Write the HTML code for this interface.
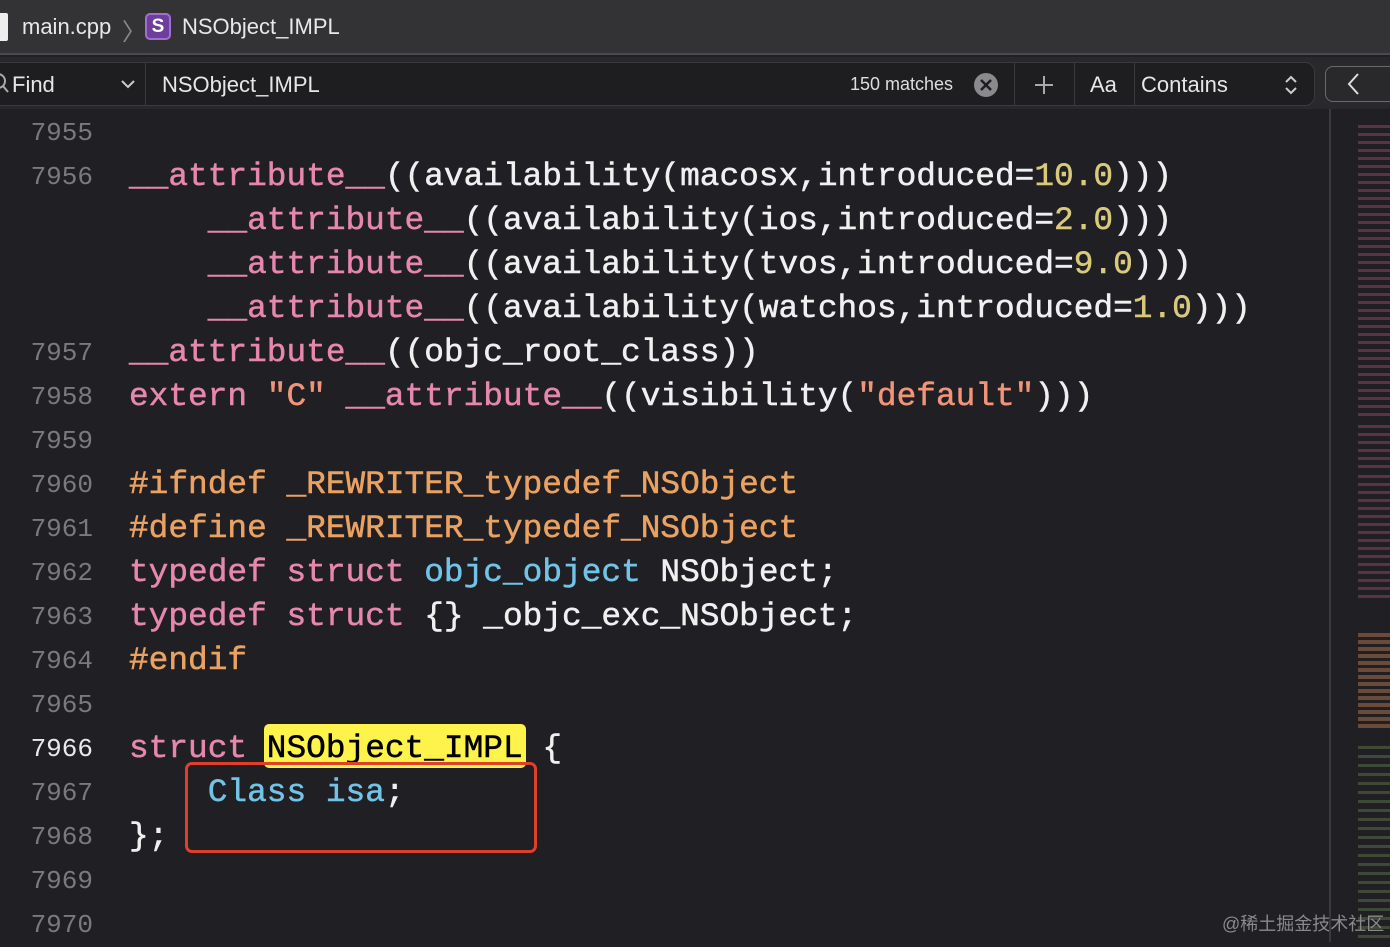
<!DOCTYPE html>
<html><head><meta charset="utf-8"><style>
*{margin:0;padding:0;box-sizing:border-box}
body{width:1390px;height:942px;background:#1f1f24;overflow:hidden;position:relative;font-family:"Liberation Sans",sans-serif;color:#e6e6e6}
.top{position:absolute;left:0;top:0;width:1390px;height:55px;background:#333336;border-bottom:2px solid #4a4a4c}
.find{position:absolute;left:0;top:57px;width:1390px;height:52px;background:#29292c}
.fb{position:absolute;top:62px;height:44px;border:1px solid #3a3a3d;background:#1e1e21}
.code{position:absolute;left:0;top:111px;width:1329px;height:831px}
.ln{position:absolute;left:13px;width:80px;text-align:right;font-family:"Liberation Mono",monospace;font-size:26px;color:#7a7a7e;line-height:44px}
.l{position:absolute;left:129px;font-family:"Liberation Mono",monospace;font-size:32.8px;line-height:44px;white-space:pre;color:#f0f0f0;-webkit-text-stroke:0.5px currentColor}
.k{color:#e587ae}.p{color:#eaa263}.b{color:#72c3e6}.n{color:#d9c97c}.s{color:#f0947a}
.mm{position:absolute;left:1329px;top:109px;width:2px;height:833px;background:#3a3a3e}
</style></head><body>
<div class="top">
 <div style="position:absolute;left:-6px;top:13px;width:14px;height:28px;background:#eee;border-radius:2px"></div>
 <div style="position:absolute;left:22px;top:14px;font-size:22px;color:#e8e8e8">main.cpp</div>
 <div style="position:absolute;left:122px;top:12px;font-size:24px;color:#888">〉</div>
 <div style="position:absolute;left:145px;top:13px;width:26px;height:27px;background:#6d3e9c;border:2px solid #a070d0;border-radius:5px;color:#fff;font-weight:bold;font-size:19px;text-align:center;line-height:23px">S</div>
 <div style="position:absolute;left:182px;top:14px;font-size:22px;color:#e8e8e8">NSObject_IMPL</div>
</div>
<div class="find"></div>
<div class="fb" style="left:-2px;width:1317px;border-radius:0 10px 10px 0"></div>
<div style="position:absolute;left:145px;top:62px;width:1px;height:44px;background:#3a3a3d"></div>
<div style="position:absolute;left:1014px;top:62px;width:1px;height:44px;background:#3a3a3d"></div>
<div style="position:absolute;left:1074px;top:62px;width:1px;height:44px;background:#3a3a3d"></div>
<div style="position:absolute;left:1134px;top:62px;width:1px;height:44px;background:#3a3a3d"></div>
<svg style="position:absolute;left:-8px;top:72px" width="20" height="24"><circle cx="6" cy="9" r="7" fill="none" stroke="#aaa" stroke-width="2"/><line x1="11" y1="14" x2="16" y2="20" stroke="#aaa" stroke-width="2"/></svg>
<div style="position:absolute;left:12px;top:72px;font-size:22px">Find</div>
<svg style="position:absolute;left:120px;top:78px" width="16" height="12"><path d="M2 3 L8 9 L14 3" fill="none" stroke="#ccc" stroke-width="2"/></svg>
<div style="position:absolute;left:162px;top:72px;font-size:22px">NSObject_IMPL</div>
<div style="position:absolute;left:850px;top:74px;font-size:18px;color:#ddd">150 matches</div>
<svg style="position:absolute;left:973px;top:72px" width="26" height="26"><circle cx="13" cy="13" r="12" fill="#8a8a8d"/><path d="M8 8 L18 18 M18 8 L8 18" stroke="#1e1e21" stroke-width="2.5"/></svg>
<svg style="position:absolute;left:1033px;top:74px" width="22" height="22"><path d="M11 2 V20 M2 11 H20" stroke="#aaa" stroke-width="2"/></svg>
<div style="position:absolute;left:1090px;top:72px;font-size:22px">Aa</div>
<div style="position:absolute;left:1141px;top:72px;font-size:22px">Contains</div>
<svg style="position:absolute;left:1283px;top:74px" width="16" height="22"><path d="M3 8 L8 3 L13 8 M3 14 L8 19 L13 14" fill="none" stroke="#ccc" stroke-width="2"/></svg>
<div style="position:absolute;left:1325px;top:66px;width:80px;height:36px;border:1.5px solid #6a6a6d;border-radius:8px"></div>
<svg style="position:absolute;left:1344px;top:72px" width="20" height="24"><path d="M14 2 L5 12 L14 22" fill="none" stroke="#ddd" stroke-width="2"/></svg>

<div class="code">
<div class="ln" style="top:0">7955</div>
<div class="ln" style="top:44px">7956</div>
<div class="ln" style="top:220px">7957</div>
<div class="ln" style="top:264px">7958</div>
<div class="ln" style="top:308px">7959</div>
<div class="ln" style="top:352px">7960</div>
<div class="ln" style="top:396px">7961</div>
<div class="ln" style="top:440px">7962</div>
<div class="ln" style="top:484px">7963</div>
<div class="ln" style="top:528px">7964</div>
<div class="ln" style="top:572px">7965</div>
<div class="ln" style="top:616px;color:#e8e8e8">7966</div>
<div class="ln" style="top:660px">7967</div>
<div class="ln" style="top:704px">7968</div>
<div class="ln" style="top:748px">7969</div>
<div class="ln" style="top:792px">7970</div>
<div class="l" style="top:44px"><span class="k">__attribute__</span>((availability(macosx,introduced=<span class="n">10.0</span>)))</div>
<div class="l" style="top:88px">    <span class="k">__attribute__</span>((availability(ios,introduced=<span class="n">2.0</span>)))</div>
<div class="l" style="top:132px">    <span class="k">__attribute__</span>((availability(tvos,introduced=<span class="n">9.0</span>)))</div>
<div class="l" style="top:176px">    <span class="k">__attribute__</span>((availability(watchos,introduced=<span class="n">1.0</span>)))</div>
<div class="l" style="top:220px"><span class="k">__attribute__</span>((objc_root_class))</div>
<div class="l" style="top:264px"><span class="k">extern</span> <span class="s">"C"</span> <span class="k">__attribute__</span>((visibility(<span class="s">"default"</span>)))</div>
<div class="l" style="top:352px"><span class="p">#ifndef _REWRITER_typedef_NSObject</span></div>
<div class="l" style="top:396px"><span class="p">#define _REWRITER_typedef_NSObject</span></div>
<div class="l" style="top:440px"><span class="k">typedef</span> <span class="k">struct</span> <span class="b">objc_object</span> NSObject;</div>
<div class="l" style="top:484px"><span class="k">typedef</span> <span class="k">struct</span> {} _objc_exc_NSObject;</div>
<div class="l" style="top:528px"><span class="p">#endif</span></div>
<div style="position:absolute;left:264px;top:613px;width:262px;height:44px;background:#fdf34a;border-radius:5px"></div>
<div class="l" style="top:616px"><span class="k">struct</span> <span style="color:#000">NSObject_IMPL</span> {</div>
<div class="l" style="top:660px">    <span class="b">Class</span> <span class="b">isa</span>;</div>
<div class="l" style="top:704px">};</div>
<div style="position:absolute;left:185px;top:651px;width:352px;height:91px;border:3.5px solid #e0402a;border-radius:7px"></div>
</div>
<div class="mm"></div>
<div style="position:absolute;left:1358px;top:120px;width:32px;height:300px;background:repeating-linear-gradient(#1f1f24 0 5px,#5a3445 5px 8px)"></div>
<div style="position:absolute;left:1358px;top:420px;width:32px;height:50px;background:repeating-linear-gradient(#1f1f24 0 5px,#5a3445 5px 8px)"></div>
<div style="position:absolute;left:1358px;top:470px;width:32px;height:130px;background:repeating-linear-gradient(#1f1f24 0 5px,#5a3445 5px 8px)"></div>
<div style="position:absolute;left:1358px;top:630px;width:32px;height:100px;background:repeating-linear-gradient(#1f1f24 0 3px,#6a4a38 3px 7px)"></div>
<div style="position:absolute;left:1358px;top:740px;width:32px;height:200px;background:repeating-linear-gradient(#1f1f24 0 6px,#3f4a36 6px 9px)"></div>
<div style="position:absolute;left:1222px;top:910px;font-family:'Liberation Sans','Noto Sans CJK SC',sans-serif;font-size:18px;color:#8a8a8a">@稀土掘金技术社区</div>
</body></html>
